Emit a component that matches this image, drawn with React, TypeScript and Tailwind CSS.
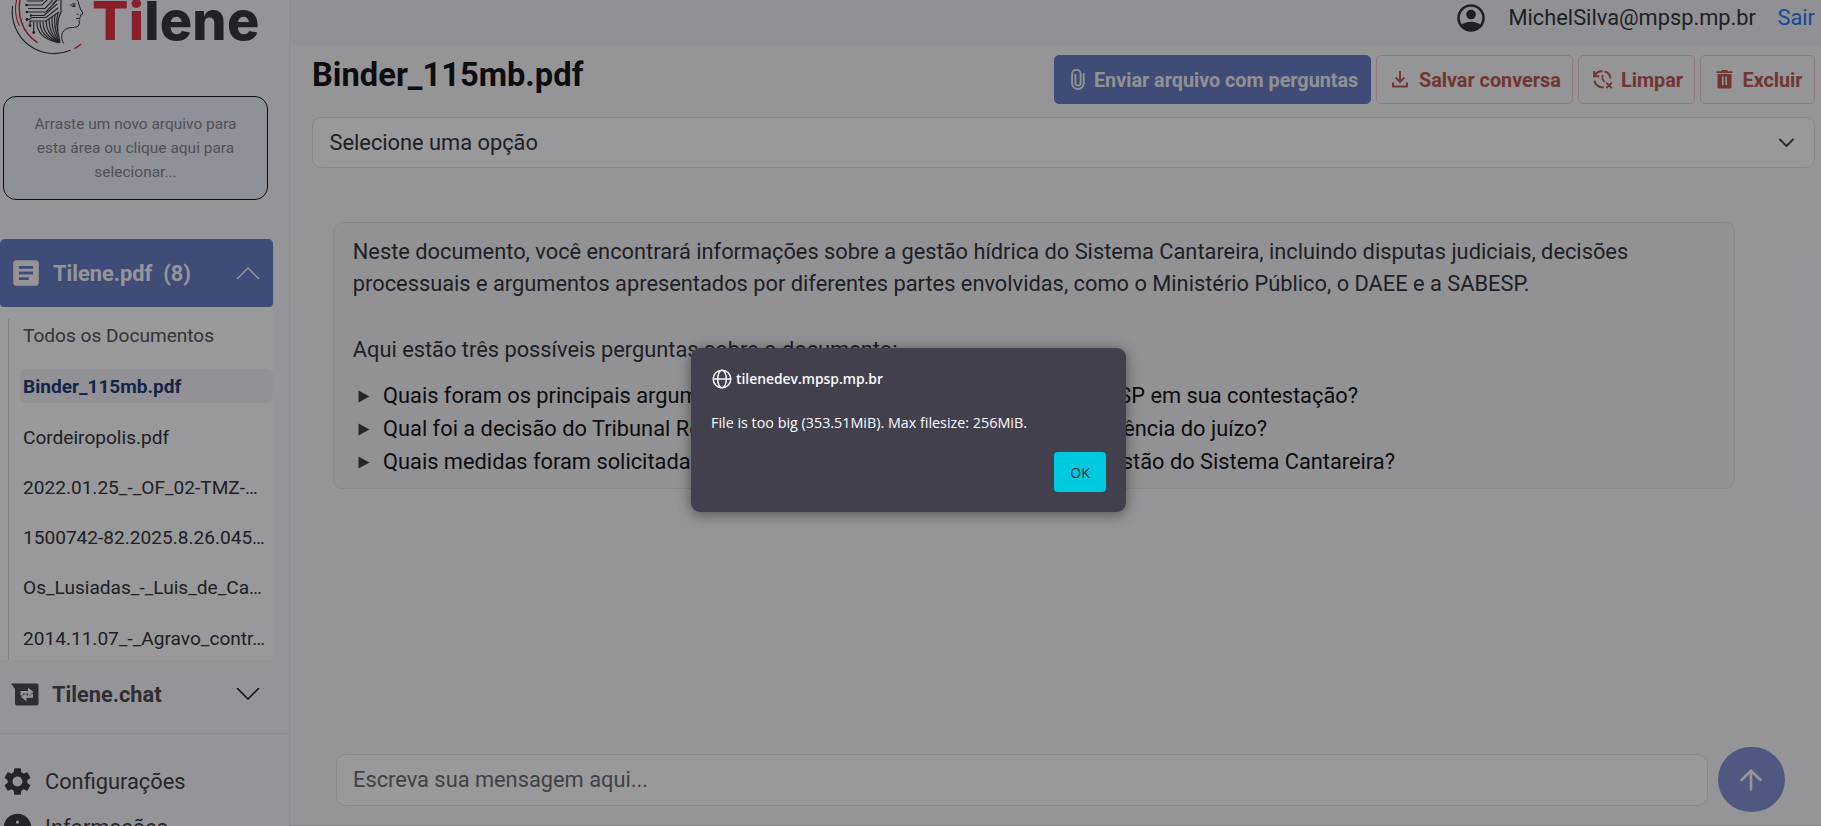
import type { ReactNode } from "react";
import { MdArticle, MdSettings, MdInfo } from "react-icons/md";

const documents = [
  "Cordeiropolis.pdf",
  "2022.01.25_-_OF_02-TMZ-…",
  "1500742-82.2025.8.26.045…",
  "Os_Lusiadas_-_Luis_de_Ca…",
  "2014.11.07_-_Agravo_contr…",
];

function LogoMark() {
  return (
    <svg width="94" height="56" viewBox="0 0 94 56" fill="none" className="shrink-0">
      <path d="M12.600 6A42 42 0 0 0 70.600 50.300" stroke="#26262a" strokeWidth="1.100" />
      <path d="M16.600 0A39 39 0 0 0 19.500 26" stroke="#c41f2c" strokeWidth="1.100" />
      <path d="M20 0C17.500 14 21 32 37.400 42.600" stroke="#c41f2c" strokeWidth="1.500" />
      <path d="M74.500 48.600Q78 47 81 44" stroke="#c41f2c" strokeWidth="1.300" />
      <path d="M93 12A40 40 0 0 1 83 38" stroke="#fff" strokeWidth="0.700" opacity="0.500" />
      <g stroke="#26262a" strokeWidth="1.150">
        <path d="M27 1H42L46 -3" />
        <path d="M26 5H42L49 -2" />
        <path d="M28 8.500H45L53 0" />
        <path d="M27 12H37L39 12H46L56 1" />
        <path d="M31 15.500H44L57 4" />
        <path d="M27 19.500H29L32 17.500H46L58 8" />
        <path d="M30 25V21H46L59 12" />
        <path d="M33.700 32V22" />
        <path d="M37 22C36.500 32 44 40 59 42.600" />
        <path d="M40 22C40 32 47 39 59 42.600" />
        <path d="M43 22C43 32 49 38 59 42.600" />
        <path d="M46 21C46 31 51 37 59 42.600" />
        <path d="M49 19C49 29 53 37 59 42.600" />
        <path d="M52 17C51 28 55 36 59.500 42.600" />
        <path d="M55 15C53 26 57 34 59.500 42.600" />
        <path d="M58 13C55 23 58 32 60 42.600" />
        <path d="M53 4L58 -1M58 0L61 -1V12C58 18 57 24 58 31" />
      </g>
      <g fill="#26262a">
        <circle cx="26.500" cy="5" r="1.300" />
        <circle cx="26.800" cy="12" r="1.300" />
        <circle cx="27" cy="19.500" r="1.400" />
        <circle cx="30" cy="25.600" r="1.400" />
        <circle cx="33.700" cy="32.500" r="1.400" />
        <circle cx="31" cy="15.500" r="1.200" />
      </g>
      <path
        d="M76 -1Q79 1 79 5Q80 9 82.800 13Q83 14.700 80.500 15Q81.500 17 79.500 18Q80.500 19.500 79 20.500Q80.500 24 78 26.300C74 28.500 68 26 63.500 31C60.500 35 61.500 40 63.800 43.500"
        stroke="#26262a"
        strokeWidth="1"
      />
      <path d="M70 5.500Q73 2.500 76 4M71.500 6.500H75.500M76.500 14L78.500 14.500M76 18.500H79" stroke="#26262a" strokeWidth="0.900" />
      <circle cx="73.800" cy="5.500" r="1.100" fill="#26262a" />
    </svg>
  );
}

function Chevron({ up = false, className }: { up?: boolean; className: string }) {
  return (
    <svg width="24" height="14" viewBox="0 0 24 14" fill="none" className={className}>
      <path
        d={up ? "M1.500 12.500L12 2L22.500 12.500" : "M1.500 1.500L12 12L22.500 1.500"}
        stroke="currentColor"
        strokeWidth="1.500"
        strokeLinecap="round"
        strokeLinejoin="round"
      />
    </svg>
  );
}

function ActionButton({ icon, label, className }: { icon: ReactNode; label: string; className: string }) {
  return (
    <button
      className={`flex h-[49px] shrink-0 items-center rounded-[5px] border border-[#ecc9c6] text-[19.800px] font-bold whitespace-nowrap text-[#b54f40] ${className}`}
    >
      {icon}
      <span className="pt-[2px]">{label}</span>
    </button>
  );
}

function Question({ start, end, className }: { start: string; end: string; className: string }) {
  return (
    <li className="flex h-[33px] items-center pl-[24px]">
      <svg width="12" height="13" viewBox="0 0 12 13" className="mr-[13px] shrink-0">
        <path d="M0.500 0.500L11.500 6.500L0.500 12.500Z" fill="#303033" />
      </svg>
      <span className={`flex justify-between whitespace-nowrap text-black ${className}`}>
        <span>{start}</span>
        <span>{end}</span>
      </span>
    </li>
  );
}

function Sidebar() {
  return (
    <aside className="flex h-full w-[290px] shrink-0 flex-col border-r border-[#e9eaec] bg-[#f7f8f9]">
      <div className="flex h-[96px] shrink-0 items-start">
        <LogoMark />
        <div className="-mt-[9px] -ml-[2px] font-['Inter',sans-serif] text-[54px] leading-[60px] font-extrabold tracking-[0.200px] text-[#2a272b]">
          <span className="text-[#e02433]">Ti</span>lene
        </div>
      </div>

      <div className="ml-[3px] flex h-[104px] w-[265px] shrink-0 items-center justify-center rounded-[13px] border border-black bg-[#edf2fb] px-[25px] pt-[2px] text-center text-[15.480px] leading-[23.700px] text-[#7c7d80]">
        Arraste um novo arquivo para esta área ou clique aqui para selecionar...
      </div>

      <div className="mt-[39px] flex h-[68px] w-[273px] shrink-0 items-center rounded-[5px] bg-[#5a76be] pl-[9px] text-[21.750px] font-bold text-[#f8f9fa] shadow-[0_1px_1px_#8794c0]">
        <MdArticle size={34} />
        <span className="ml-[10px] pt-[3px]">Tilene.pdf</span>
        <span className="ml-[11px] pt-[3px]">(8)</span>
        <Chevron up className="mr-[13px] ml-auto" />
      </div>

      <nav className="flex h-[353px] w-[273px] shrink-0 bg-white pt-[12px] pl-[8px]">
        <ul className="flex h-full flex-1 flex-col border-l border-[#d2d3d6] pl-[11px] text-[19.080px] leading-[34px] text-[#212529]">
          <li className="mb-[16.300px] h-[34px] shrink-0 pl-[3px] text-[#47484b]">Todos os Documentos</li>
          <li className="mb-[16.300px] h-[34px] shrink-0 rounded-[6px] bg-[#f3f4f6] pl-[3px] leading-[35px] font-bold text-[#0b2f66]">
            Binder_115mb.pdf
          </li>
          {documents.map((name) => (
            <li key={name} className="mb-[16.300px] h-[34px] shrink-0 pl-[3px] leading-[35px] whitespace-nowrap">
              {name}
            </li>
          ))}
        </ul>
      </nav>

      <div className="flex h-[73px] w-[273px] shrink-0 items-center pb-[5px] pl-[11px] text-[21.750px] font-bold text-[#3c3d40]">
        <svg width="28" height="23" viewBox="0 0 28 23">
          <path d="M0 0.500H25.500Q27.500 0.500 27.500 2.500V20.500Q27.500 22.500 25.500 22.500H6Q4 22.500 4 20.500V6Z" fill="currentColor" />
          <path
            d="M9.500 8H17V4.500L22.500 9L17 13.200V10.500H12V12.500H9.500ZM22 14.800H15.500V18.300L10 14L15.500 10V12.500H19.500V11.500L22 10.500Z"
            fill="#f7f8f9"
          />
        </svg>
        <span className="ml-[13px] pt-[2px]">Tilene.chat</span>
        <Chevron className="mr-[13px] ml-auto text-black" />
      </div>

      <div className="flex flex-1 flex-col border-t border-[#e9eaec] pt-[24px] pl-px text-[21.800px] text-[#303134]">
        <div className="flex h-[46px] shrink-0 items-center">
          <MdSettings size={33} className="text-[#2b2c2f]" />
          <span className="ml-[11px] pt-[2px]">Configurações</span>
        </div>
        <div className="flex h-[46px] shrink-0 items-center">
          <MdInfo size={33} className="text-[#2b2c2f]" />
          <span className="ml-[11px] pt-[3px]">Informações</span>
        </div>
      </div>
    </aside>
  );
}

function Toolbar() {
  return (
    <div className="flex h-[49px] items-center gap-[5px]">
      <h1 className="-mt-[9px] mr-auto text-[32.700px] leading-[40px] font-bold text-black">Binder_115mb.pdf</h1>
      <button className="flex h-[49px] w-[317px] shrink-0 items-center rounded-[5px] border border-[#5a76be] bg-[#5a76be] pl-[16px] text-[19.750px] font-bold whitespace-nowrap text-[#f1f2f3]">
        <svg width="14" height="21" viewBox="0 0 14 21" fill="none" className="mr-[9px]">
          <path
            d="M12.700 4V14.500A5.800 5.500 0 0 1 1.100 14.500V5A4 4 0 0 1 9.600 5V14A2.600 2.600 0 0 1 4.400 14V5"
            stroke="currentColor"
            strokeWidth="1.900"
          />
        </svg>
        <span className="pt-[2px]">Enviar arquivo com perguntas</span>
      </button>
      <ActionButton
        label="Salvar conversa"
        className="w-[197px] pl-[15px]"
        icon={
          <svg width="16" height="17" viewBox="0 0 16 17" fill="none" stroke="currentColor" strokeWidth="1.900" className="mr-[11px]">
            <path d="M8 0V10.500M3.700 6.500L8 10.800L12.300 6.500" />
            <path d="M1 11.500V15.500H15V11.500" strokeLinejoin="round" />
          </svg>
        }
      />
      <ActionButton
        label="Limpar"
        className="w-[117px] pl-[14px]"
        icon={
          <svg width="20" height="19" viewBox="0 0 20 19" fill="none" stroke="currentColor" strokeWidth="2" className="mr-[8px]">
            <path d="M1.200 1V6.300H6.200" />
            <path d="M1.500 6.200A8 8 0 0 1 9.500 1.300" />
            <path d="M11.500 1.500A8 8 0 0 1 17.600 8.500" />
            <path d="M1.300 10.500A8.200 8.200 0 0 0 10.800 17.200" />
            <path d="M9.500 5V9.500L11.800 11.800" strokeWidth="1.700" />
            <path d="M13.300 12.600L18.800 18.100M18.800 12.600L13.300 18.100" />
          </svg>
        }
      />
      <ActionButton
        label="Excluir"
        className="w-[115px] pl-[14.500px]"
        icon={
          <svg width="17" height="19" viewBox="0 0 17 19" className="mr-[10px]">
            <path
              fillRule="evenodd"
              fill="currentColor"
              d="M0.500 1.300H5.500V0H11.500V1.300H16.500V3H0.500ZM1.500 4H15.500V17Q15.500 18.500 14 18.500H3Q1.500 18.500 1.500 17ZM6 6.500V15H7.600V6.500ZM9.400 6.500V15H11V6.500Z"
            />
          </svg>
        }
      />
    </div>
  );
}

function AlertDialog() {
  return (
    <div
      role="alertdialog"
      className="absolute top-[348px] left-[691px] flex h-[164px] w-[435px] flex-col rounded-[9px] bg-[#42404d] px-[20px] pt-[20px] font-['Open_Sans',sans-serif] text-[#fbfbfe] shadow-[0_2px_14px_rgba(0,0,0,0.45),0_0_1px_rgba(160,160,170,0.600)]"
    >
      <div className="flex h-[21px] items-center text-[13.850px] font-semibold">
        <svg width="20" height="20" viewBox="0 0 20 20" fill="none" stroke="currentColor" strokeWidth="1.500" className="mr-[4px] ml-px">
          <circle cx="10" cy="10" r="8.800" />
          <ellipse cx="10" cy="10" rx="4.300" ry="8.800" />
          <path d="M1.200 10H18.800" />
        </svg>
        <span className="pt-px">tilenedev.mpsp.mp.br</span>
      </div>
      <p className="mt-[23px] text-[14.330px] leading-[21px] whitespace-nowrap">
        File is too big (353.51MiB). Max filesize: 256MiB.
      </p>
      <button className="mt-[19px] h-[40px] w-[52px] self-end rounded-[4px] bg-[#00cade] text-[14px] font-medium text-[#2b2a33]">
        OK
      </button>
    </div>
  );
}

export default function App() {
  return (
    <div className="relative flex h-[826px] w-full overflow-hidden bg-[#f8f9fa] font-['Roboto',sans-serif] text-[21.820px] text-[#212529]">
      <Sidebar />

      <main className="flex min-w-0 flex-1 flex-col">
        <header className="flex h-[45px] shrink-0 items-center justify-end bg-[#f0f1f2] pr-[6px] pb-[10px]">
          <svg width="28" height="28" viewBox="0 0 28 28" fill="none">
            <circle cx="14" cy="14" r="12.500" stroke="#212529" strokeWidth="2.500" />
            <circle cx="14" cy="10.500" r="4.800" fill="#212529" />
            <path d="M3.700 21.500C9 16.500 19 16.500 24.300 21.500C19 28 9 28 3.700 21.500Z" fill="#212529" />
          </svg>
          <span className="ml-[24px] pt-px">MichelSilva@mpsp.mp.br</span>
          <a className="ml-[21.500px] pt-px text-[#0d6efd]">Sair</a>
        </header>

        <section className="flex min-h-0 flex-1 flex-col border-b border-[#d7d8da] pt-[10px] pr-[6px] pl-[22px]">
          <Toolbar />

          <div className="mt-[13px] flex h-[51px] shrink-0 items-center rounded-[9px] border border-[#dee2e6] bg-white pr-[20px] pl-[16.500px]">
            <span className="pt-[2px]">Selecione uma opção</span>
            <svg width="15" height="10" viewBox="0 0 15 10" fill="none" className="ml-auto">
              <path d="M1 1.500L7.500 8L14 1.500" stroke="#343a40" strokeWidth="2" strokeLinecap="round" strokeLinejoin="round" />
            </svg>
          </div>

          <article className="mt-[54px] mr-[80px] ml-[21px] h-[267px] shrink-0 rounded-[9px] border border-[#dee2e6] bg-[#f3f4f5] pt-[12.600px] leading-[32.750px]">
            <p className="pl-[18.800px] whitespace-nowrap">
              Neste documento, você encontrará informações sobre a gestão hídrica do Sistema Cantareira, incluindo disputas
              judiciais, decisões
              <br />
              processuais e argumentos apresentados por diferentes partes envolvidas, como o Ministério Público, o DAEE e a
              SABESP.
              <br />
              <br />
              Aqui estão três possíveis perguntas sobre o documento:
            </p>
            <ul className="mt-[13.400px]">
              <Question start="Quais foram os principais argumentos da" end="SABESP em sua contestação?" className="w-[975px]" />
              <Question start="Qual foi a decisão do Tribunal Regional" end="competência do juízo?" className="w-[884px]" />
              <Question start="Quais medidas foram solicitadas" end="gestão do Sistema Cantareira?" className="w-[1012px]" />
            </ul>
          </article>

          <div className="mt-auto mr-[30px] mb-[13px] ml-[24px] flex items-center gap-[10px]">
            <div className="flex h-[52px] flex-1 items-center rounded-[10px] border border-[#dee2e6] bg-white pl-[16px] text-[#5f6166]">
              <span className="pt-[2px]">Escreva sua mensagem aqui...</span>
            </div>
            <button className="flex h-[65px] w-[67px] items-center justify-center rounded-full bg-[#778bd0] pr-px">
              <svg width="22" height="22" viewBox="0 0 22 22" fill="none">
                <path
                  d="M11 20.500V2M1.500 11L11 1.700L20.500 11"
                  stroke="#f8f9fa"
                  strokeWidth="2.600"
                  strokeLinecap="round"
                  strokeLinejoin="round"
                />
              </svg>
            </button>
          </div>
        </section>
      </main>

      <div className="absolute inset-0 bg-[rgba(28,27,34,0.45)]" />
      <AlertDialog />
    </div>
  );
}
